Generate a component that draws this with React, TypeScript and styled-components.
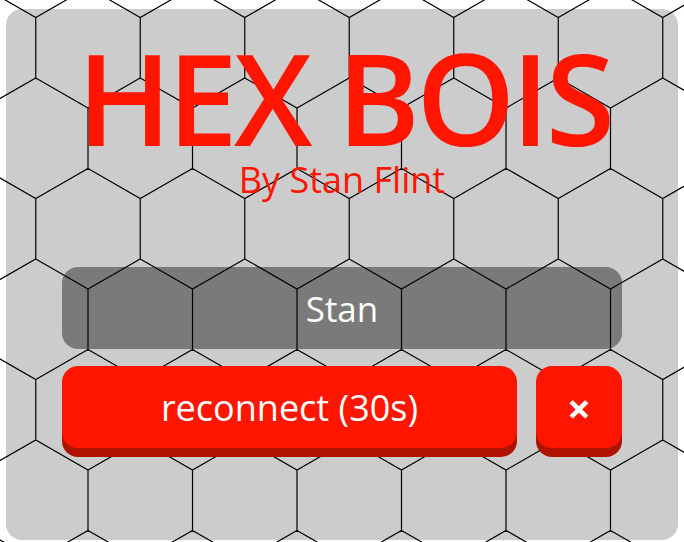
import React from 'react';
import styled, {createGlobalStyle} from 'styled-components';

const GlobalStyle = createGlobalStyle`
  html, body {
    margin: 0;
    padding: 0;
    background: #fff;
    font-family: 'Open Sans', 'Noto Sans', sans-serif;
  }
  * {
    box-sizing: border-box;
  }
`;

const HEX_R = 60.33;
const HEX_W = 104.5;
const ROW_H = 90.5;

const Page = styled.div`
  position: relative;
  width: 684px;
  height: 542px;
  padding: 9px 6px 2px;
  overflow: hidden;
`;

const Panel = styled.div`
  height: 531px;
  background: #cccccc;
  border-radius: 16px;
  padding-top: 25px;
`;

const GridLayer = styled.svg`
  position: absolute;
  inset: 0;
  width: 100%;
  height: 100%;
  z-index: 1;
  pointer-events: none;
`;

const Content = styled.div`
  position: relative;
  z-index: 2;
  display: flex;
  flex-direction: column;
  align-items: center;
`;

const Title = styled.h1`
  margin: 0 0 0 4px;
  font-size: 126px;
  line-height: 126px;
  font-weight: 600;
  letter-spacing: -4px;
  color: #ff1500;
  white-space: nowrap;
`;

const Subtitle = styled.div`
  margin-top: 2px;
  font-size: 36px;
  line-height: 36px;
  color: #ff1500;
`;

const NameInput = styled.input`
  margin-top: 69px;
  width: 560px;
  height: 82px;
  border: none;
  outline: none;
  border-radius: 16px;
  background: rgba(0, 0, 0, 0.4);
  color: #fff;
  font-family: 'Open Sans', 'Noto Sans', sans-serif;
  font-size: 35px;
  text-align: center;
  padding: 0;
`;

const ButtonRow = styled.div`
  margin-top: 17px;
  width: 560px;
  display: flex;
  gap: 19px;
`;

const RedButton = styled.button<{ $grow?: boolean; $bold?: boolean }>`
  flex: ${p => (p.$grow ? '1' : '0 0 86px')};
  height: 82px;
  border: none;
  border-radius: 16px;
  background: #ff1500;
  box-shadow: 0 9px 0 #b01200;
  color: #fff;
  font-family: 'Open Sans', 'Noto Sans', sans-serif;
  font-size: ${p => (p.$bold ? '42px' : '36px')};
  font-weight: ${p => (p.$bold ? 700 : 400)};
  cursor: pointer;
  padding: 0;
  display: flex;
  align-items: center;
  justify-content: center;
`;

function hexPath(): string {
  const parts: string[] = [];
  for (let r = -1; r < 8; r++) {
    const cy = 47.75 + r * ROW_H;
    for (let k = -1; k < 9; k++) {
      const cx = 88 + k * HEX_W - (Math.abs(r) % 2 === 1 ? HEX_W / 2 : 0);
      const pts: string[] = [];
      for (let i = 0; i < 6; i++) {
        const a = (Math.PI / 180) * (60 * i - 90);
        pts.push(`${(cx + HEX_R * Math.cos(a)).toFixed(2)},${(cy + HEX_R * Math.sin(a)).toFixed(2)}`);
      }
      parts.push(`M${pts.join('L')}Z`);
    }
  }
  return parts.join('');
}

const HexGrid: React.FC = () => (
  <GridLayer viewBox="0 0 684 542" preserveAspectRatio="none">
    <path d={hexPath()} fill="none" stroke="#000" strokeWidth={1.2}/>
  </GridLayer>
);

const App: React.FC = () => {
  return (
    <Page>
      <GlobalStyle/>
      <Panel>
        <Content>
          <Title>HEX BOIS</Title>
          <Subtitle>By Stan Flint</Subtitle>
          <NameInput defaultValue="Stan"/>
          <ButtonRow>
            <RedButton $grow>reconnect (30s)</RedButton>
            <RedButton $bold>×</RedButton>
          </ButtonRow>
        </Content>
      </Panel>
      <HexGrid/>
    </Page>
  );
};

export default App;
